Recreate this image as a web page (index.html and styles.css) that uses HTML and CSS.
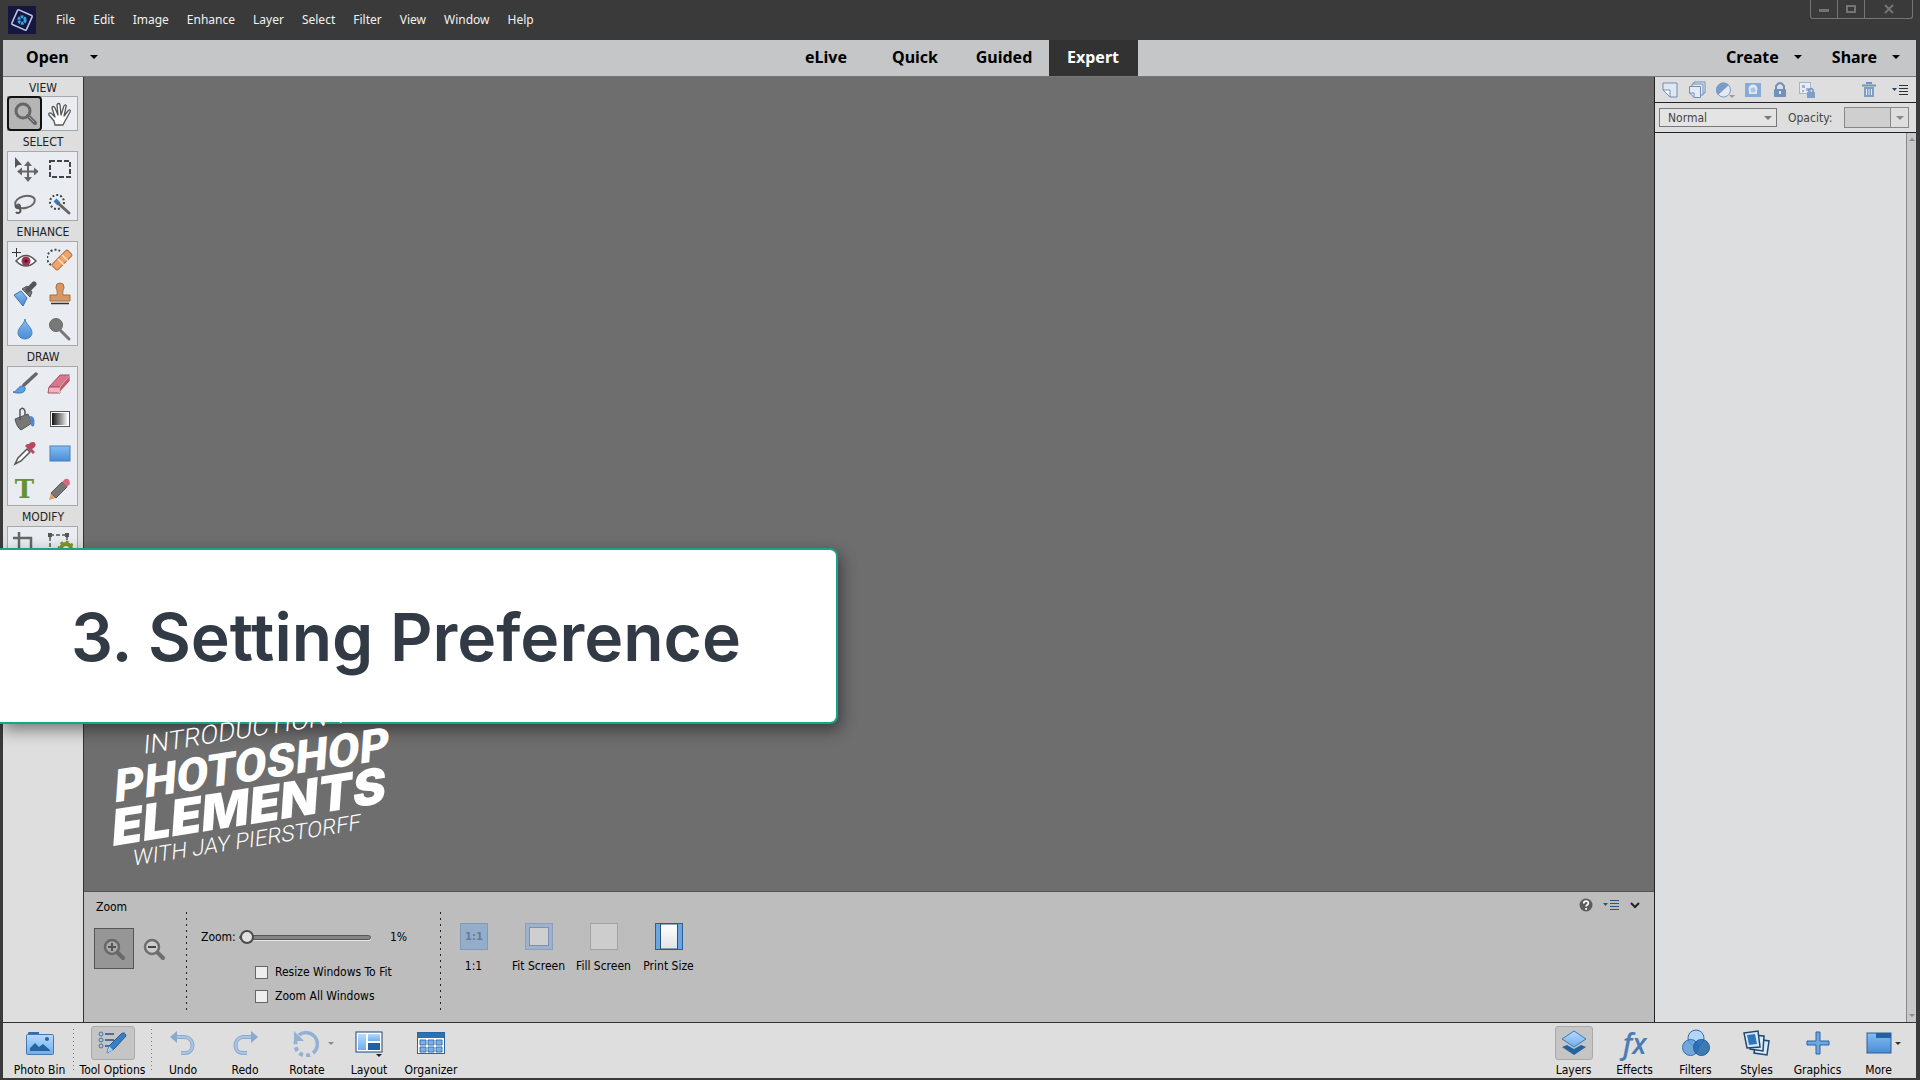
FILE: index.html
```html
<!DOCTYPE html>
<html lang="en">
<head>
<meta charset="utf-8">
<title>Photoshop Elements Editor</title>
<link rel="stylesheet" href="styles.css">
</head>
<body>
<svg width="0" height="0" class="defs" aria-hidden="true">
  <defs>
    <linearGradient id="blue" x1="0" y1="0" x2="0" y2="1"><stop offset="0" stop-color="#86bdf5"/><stop offset="1" stop-color="#4a8cd3"/></linearGradient>
    <linearGradient id="light" x1="0" y1="0" x2="0" y2="1"><stop offset="0" stop-color="#b4dbff"/><stop offset="1" stop-color="#70adec"/></linearGradient>
    <linearGradient id="fade" x1="0" y1="0" x2="1" y2="0"><stop offset="0" stop-color="#111"/><stop offset="1" stop-color="#fff"/></linearGradient>
    <linearGradient id="paper" x1="0" y1="0" x2="0" y2="1"><stop offset="0" stop-color="#fff"/><stop offset="1" stop-color="#e2e2e6"/></linearGradient>
  </defs>
</svg>

<header class="titlebar">
  <svg class="logo" width="28" height="28" viewBox="0 0 28 28"><rect width="28" height="28" fill="#171640"/><rect x="6" y="6" width="16" height="16" rx="1" fill="none" stroke="#b6cce8" stroke-width="1.5" transform="rotate(24 14 14)"/><circle cx="14" cy="14" r="3.2" fill="none" stroke="#35a8e6" stroke-width="3" stroke-dasharray="2.6 .75"/></svg>
  <nav class="menu">
    <a href="#">File</a><a href="#">Edit</a><a href="#">Image</a><a href="#">Enhance</a><a href="#">Layer</a><a href="#">Select</a><a href="#">Filter</a><a href="#">View</a><a href="#">Window</a><a href="#">Help</a>
  </nav>
  <div class="window-controls">
    <button aria-label="Minimize"><svg width="12" height="12"><path d="M1 6h10v3H1z" fill="#747474"/></svg></button>
    <button aria-label="Maximize"><svg width="12" height="12"><rect x="2" y="3" width="8" height="6" fill="none" stroke="#747474" stroke-width="2"/></svg></button>
    <button aria-label="Close" class="close"><svg width="12" height="12"><path d="M2 2l8 8M10 2l-8 8" stroke="#747474" stroke-width="2"/></svg></button>
  </div>
</header>

<div class="modebar">
  <div class="mode-side"><button class="mode-menu open">Open <i class="caret"></i></button></div>
  <nav class="tabs">
    <button>eLive</button><button>Quick</button><button>Guided</button><button class="active">Expert</button>
  </nav>
  <div class="mode-side right"><button class="mode-menu">Create <i class="caret"></i></button><button class="mode-menu">Share <i class="caret"></i></button></div>
</div>

<main class="workspace">
  <aside class="tools">
    <h2>VIEW</h2>
    <div class="toolbox">
      <button class="selected" aria-label="Zoom"><svg width="26" height="26"><circle cx="11" cy="10" r="7" fill="none" stroke="#666" stroke-width="3"/><path d="M16 15l7 7" stroke="#666" stroke-width="4" stroke-linecap="round"/><path d="M17 16l5 5" stroke="#999" stroke-width="1"/></svg></button>
      <button aria-label="Hand"><svg width="26" height="26"><path d="M8 24l-1-4-5-6c-1-2 1-3 3-1l3 3-3-9c0-2 2-2 3 0l3 7-1-10c0-2 3-2 3 0l1 10 3-9c1-2 3-1 2 1l-2 9 4-5c1-2 3-1 2 1l-5 9-2 4z" fill="#fff" stroke="#555" stroke-width="1.3" stroke-linejoin="round"/></svg></button>
    </div>
    <h2>SELECT</h2>
    <div class="toolbox">
      <button aria-label="Move"><svg width="26" height="26"><path d="M3 1l7 8H6l-3 3z" fill="#555"/><path d="M16 8v15M8 15.500h16" stroke="#666" stroke-width="2"/><path d="M16 5l4 5h-8zM16 26l4-5h-8zM5 15.500l5-4v8zM27 15.500l-5-4v8z" fill="#666"/></svg></button>
      <button aria-label="Marquee"><svg width="26" height="26"><rect x="3" y="5" width="20" height="16" fill="none" stroke="#444" stroke-width="2" stroke-dasharray="5 2"/></svg></button>
      <button aria-label="Lasso"><svg width="26" height="26"><ellipse cx="13" cy="11" rx="10" ry="6" fill="none" stroke="#666" stroke-width="2" transform="rotate(-14 13 11)"/><path d="M4 14c-2 4 5 4 4 1s-5-1-1 2-1 7-3 4" fill="none" stroke="#555" stroke-width="2"/></svg></button>
      <button aria-label="Quick selection"><svg width="26" height="26"><circle cx="10" cy="11" r="7" fill="none" stroke="#444" stroke-width="2" stroke-dasharray="2 2"/><path d="M8 9l4 4" stroke="#3478bd" stroke-width="4"/><path d="M12 13l10 9" stroke="#666" stroke-width="3" stroke-linecap="round"/></svg></button>
    </div>
    <h2>ENHANCE</h2>
    <div class="toolbox">
      <button aria-label="Red eye"><svg width="26" height="26"><path d="M4 15q10-11 20 0-10 10-20 0z" fill="#fff" stroke="#555" stroke-width="1.500"/><circle cx="14" cy="15" r="4.500" fill="#a03050"/><circle cx="14" cy="15" r="1.500" fill="#401020"/><path d="M0 6.500h9M4.500 2v9" stroke="#333"/></svg></button>
      <button aria-label="Spot healing"><svg width="26" height="26"><path d="M4 19a8 8 0 1 1 9-14" fill="none" stroke="#444" stroke-width="2" stroke-dasharray="2 2"/><rect x="4" y="10" width="22" height="8" rx="2" fill="#eda56e" stroke="#b8713d" transform="rotate(-45 15 14)"/><path d="M11 13l6 6M15 9l6 6" stroke="#fbe0c8" stroke-width="1.500"/></svg></button>
      <button aria-label="Smart brush"><svg width="26" height="26"><path d="M2 14l7-4 6 7-4 8z" fill="url(#blue)" stroke="#3d6fa8"/><path d="M10 8l8 8 2-5-5-6z" fill="#777" stroke="#555"/><path d="M16 9l6-6" stroke="#555" stroke-width="5" stroke-linecap="round"/></svg></button>
      <button aria-label="Clone stamp"><svg width="26" height="26"><path d="M9 6a4 4 0 0 1 8 0c0 3-2 3-1 8h7v6H3v-6h7c1-5-1-5-1-8z" fill="#d59866" stroke="#a86c3e"/><path d="M4 22.500h18" stroke="#333" stroke-width="1.500"/></svg></button>
      <button aria-label="Blur"><svg width="26" height="26"><path d="M13 3c1 6 7 8 7 14a7 6 0 0 1-14 0c0-6 6-8 7-14z" fill="url(#blue)" stroke="#4b83bd"/></svg></button>
      <button aria-label="Dodge"><svg width="26" height="26"><circle cx="9" cy="9" r="6.500" fill="#777" stroke="#666"/><path d="M13 14l9 9" stroke="#777" stroke-width="3" stroke-linecap="round"/></svg></button>
    </div>
    <h2>DRAW</h2>
    <div class="toolbox">
      <button aria-label="Brush"><svg width="26" height="26"><path d="M12 14l12-11" stroke="#666" stroke-width="3.500" stroke-linecap="round"/><path d="M1 21c4 0 5-6 9-6 5 0 4 7-2 7-3 0-5 0-7-1z" fill="#5a9fe6" stroke="#3978b5"/></svg></button>
      <button aria-label="Eraser"><svg width="26" height="26"><path d="M2 16L13 4h10L13 16z" fill="#d9788b" stroke="#a8506a"/><path d="M2 16h11v6H1z" fill="#f2b3bf" stroke="#a8506a"/><path d="M13 16L23 4v6L12 22z" fill="#bd5a70" stroke="#fff" stroke-width=".5"/></svg></button>
      <button aria-label="Paint bucket"><svg width="26" height="26"><path d="M3 13l13-5 4 9-11 7c-3-2-5-6-6-11z" fill="#777" stroke="#555"/><path d="M8 14V4q3-4 5 1v4" fill="none" stroke="#555" stroke-width="1.500"/><path d="M18 10c5 0 5 6 4 10-2 1-3 0-3-2z" fill="#4a8ad2"/></svg></button>
      <button aria-label="Gradient"><svg width="26" height="26"><rect x="3.500" y="5.500" width="19" height="15" fill="#fff" stroke="#555"/><rect x="5" y="7" width="16" height="12" fill="url(#fade)"/></svg></button>
      <button aria-label="Color picker"><svg width="26" height="26"><path d="M3 23l3-6 9-9 3 3-9 9z" fill="#fff" stroke="#555" stroke-width="1.500"/><path d="M13 5l8 8 2-2-3-3c4-2 4-4 3-6s-5-1-6 1l-2 0z" fill="#b8495e"/></svg></button>
      <button aria-label="Shape"><svg width="26" height="26"><rect x="3" y="5" width="20" height="15" fill="url(#blue)" stroke="#4a80ba"/></svg></button>
      <button aria-label="Type" class="type">T</button>
      <button aria-label="Pencil"><svg width="26" height="26"><path d="M2 24l2-7 5 5z" fill="#dba070"/><path d="M4 17L15 6l5 5L9 22z" fill="#777" stroke="#5a5a5a"/><path d="M15 6l3-3q5-1 5 5l-3 3z" fill="#d6697e"/></svg></button>
    </div>
    <h2>MODIFY</h2>
    <div class="toolbox">
      <button aria-label="Crop"><svg width="26" height="26"><path d="M7 1v18h18M1 7h18v18" fill="none" stroke="#666" stroke-width="2.500"/></svg></button>
      <button aria-label="Recompose"><svg width="26" height="26"><rect x="3" y="4" width="17" height="16" fill="none" stroke="#555" stroke-width="1.500" stroke-dasharray="4 2"/><path d="M1 2h4v4H1zM18 2h4v4h-4z" fill="#555"/><circle cx="19" cy="18" r="5" fill="none" stroke="#7f962f" stroke-width="4"/><circle cx="19" cy="18" r="7.500" fill="none" stroke="#7f962f" stroke-width="2" stroke-dasharray="3 2.800"/></svg></button>
    </div>
  </aside>

  <section class="center">
    <div class="canvas"></div>
    <section class="options">
      <div class="zoom-mode">
        <h3>Zoom</h3>
        <div class="zoom-buttons">
          <button class="selected" aria-label="Zoom in"><svg width="24" height="24"><circle cx="10" cy="10" r="7" fill="#a9a9a9" stroke="#686868" stroke-width="2.500"/><path d="M6 10h8M10 6v8" stroke="#555" stroke-width="2"/><path d="M16 16l5 5" stroke="#686868" stroke-width="4" stroke-linecap="round"/></svg></button>
          <button aria-label="Zoom out"><svg width="24" height="24"><circle cx="10" cy="10" r="7" fill="#ccc" stroke="#6e6e6e" stroke-width="2.500"/><path d="M6 10h8" stroke="#444" stroke-width="2"/><path d="M16 16l5 5" stroke="#6e6e6e" stroke-width="4" stroke-linecap="round"/></svg></button>
        </div>
      </div>
      <form class="zoom-settings">
        <div class="zoom-line"><label for="zoom">Zoom:</label><input id="zoom" type="range" min="0" max="100" value="0"><output for="zoom">1%</output></div>
        <label class="check"><input type="checkbox"> Resize Windows To Fit</label>
        <label class="check"><input type="checkbox"> Zoom All Windows</label>
      </form>
      <div class="fit-buttons">
        <button><svg width="28" height="28"><rect x=".5" y=".5" width="27" height="26" fill="#94adcb" stroke="#8299b6"/><text x="14" y="17" text-anchor="middle" class="ratio">1:1</text></svg>1:1</button>
        <button><svg width="28" height="28"><rect x=".5" y=".5" width="27" height="26" fill="#9fb2cc" stroke="#8b9fbb"/><rect x="4.500" y="4.500" width="19" height="18" fill="#cfcfcf" stroke="#7d92b0"/></svg>Fit Screen</button>
        <button><svg width="28" height="28"><rect x=".5" y=".5" width="27" height="26" fill="#cdcdcd" stroke="#a2a2a2"/></svg>Fill Screen</button>
        <button><svg width="28" height="28"><rect x=".5" y=".5" width="27" height="26" fill="#6aa7e0" stroke="#2e5f96"/><path d="M5.500 1h17v25h-17z" fill="url(#paper)" stroke="#2b5180"/></svg>Print Size</button>
      </div>
      <div class="panel-actions">
        <button aria-label="Help"><svg width="14" height="14"><circle cx="7" cy="7" r="6.500" fill="#5c5c5c"/><path d="M4.800 5.500q0-2.300 2.300-2.300t2.200 2q0 1.200-1.200 1.800-1 .6-1 1.600M7.100 10v1.800" fill="none" stroke="#fff" stroke-width="1.800"/></svg></button>
        <button aria-label="Panel menu"><svg width="16" height="12"><path d="M0 4h5L2.500 7z" fill="#2c5584"/><path d="M7 1.500h9M7 4.500h9M7 7.500h9M7 10.500h9" stroke="#2c5584"/></svg></button>
        <button aria-label="Collapse"><svg width="12" height="12"><path d="M2 4l4 4 4-4" fill="none" stroke="#222" stroke-width="2"/></svg></button>
      </div>
    </section>
  </section>

  <aside class="layers">
    <div class="layer-tools">
      <button aria-label="New layer"><svg width="18" height="18"><path d="M2 2h14v14H9L2 9z" fill="#dfe7f2" stroke="#6e8eb6"/><path d="M2 9h7v7z" fill="#fff" stroke="#6e8eb6"/></svg></button>
      <button aria-label="New group"><svg width="18" height="18"><path d="M6 1h11v11H6z" fill="#e3eaf3" stroke="#6e8eb6"/><path d="M4 3h11v11H4z" fill="#e3eaf3" stroke="#6e8eb6"/><path d="M1.500 5.500h11v11H6l-4.500-4.500z" fill="#e3eaf3" stroke="#6e8eb6"/><path d="M1.500 12H6v4.500" fill="none" stroke="#6e8eb6"/></svg></button>
      <button aria-label="Adjustment layer"><svg width="20" height="18"><circle cx="8.500" cy="9" r="7" fill="#e4eaf2" stroke="#7b9cc5"/><path d="M3 14A7 7 0 0 1 14 4z" fill="#7b9cc5"/><path d="M14 14h6l-3 3z" fill="#999"/></svg></button>
      <button aria-label="Layer mask"><svg width="18" height="18"><rect x="1" y="2" width="16" height="14" fill="#85acd9"/><circle cx="9" cy="8" r="4.500" fill="#dfe7f2"/><path d="M5 9h8v4H5z" fill="#dfe7f2"/><circle cx="9" cy="9" r="2.500" fill="#a9c4e4"/></svg></button>
      <button aria-label="Lock"><svg width="18" height="18"><path d="M5 8V5q4-6 8 0v3" fill="none" stroke="#6f91bb" stroke-width="2"/><rect x="3" y="8" width="12" height="8" rx="1" fill="#6f91bb"/><path d="M9 10v3" stroke="#e4eaf2" stroke-width="2"/></svg></button>
      <button aria-label="Lock transparency"><svg width="18" height="18"><rect x="1.500" y="1.500" width="11" height="11" fill="#e9edf3" stroke="#a1b6d0"/><path d="M4 4h3v3H4zM8 7h3v3H8zM4 9h2v2H4z" fill="#9cb4d2"/><path d="M11 12V9q2-3 4 0v3" fill="none" stroke="#6f91bb" stroke-width="1.500"/><rect x="9" y="11" width="8" height="6" fill="#7f9fc7"/></svg></button>
      <button aria-label="Delete" class="trash"><svg width="18" height="18"><path d="M2 4.500h14M6 2h6" stroke="#7394bb" stroke-width="2"/><path d="M4 6h10v10H4z" fill="#7d9ec6"/><path d="M6.500 8v6M9 8v6M11.500 8v6" stroke="#e4eaf2"/></svg></button>
      <button aria-label="Panel menu" class="panel-menu"><svg width="16" height="12"><path d="M0 4h5L2.500 7z" fill="#24466c"/><path d="M7 1.500h9M7 4.500h9M7 7.500h9M7 10.500h9" stroke="#333"/></svg></button>
    </div>
    <div class="blend">
      <div class="select-wrap"><select aria-label="Blend mode"><option>Normal</option></select><i class="caret"></i></div>
      <label for="opacity">Opacity:</label>
      <div class="combo"><input id="opacity" type="text" disabled><button aria-label="Opacity slider"><i class="caret"></i></button></div>
    </div>
    <div class="layer-list"><div class="scrollbar"><i class="caret up"></i><i class="caret"></i></div></div>
  </aside>
</main>

<footer class="taskbar">
  <button class="task bin"><span><svg width="28" height="24"><path d="M2 5V2q0-1 1-1h10v4z" fill="#3f6c9c"/><rect x=".5" y="3.500" width="27" height="20" rx="1" fill="url(#light)" stroke="#4578b0"/><path d="M4 20v-3l5-5 4 4 4-3 7 6v1z" fill="#24659f"/><circle cx="21" cy="8" r="2" fill="#24659f"/></svg></span>Photo Bin</button>
  <button class="task options-toggle"><span class="selected"><svg width="30" height="24"><circle cx="3" cy="3" r="2" fill="none" stroke="#44719f"/><circle cx="3" cy="9" r="2" fill="none" stroke="#44719f"/><circle cx="3" cy="15" r="2" fill="none" stroke="#44719f"/><path d="M7 3h9M7 9h9M7 15h4" stroke="#44719f" stroke-width="2"/><path d="M9 22l2-7L23 3q4-3 5 2L16 18z" fill="#397fc7" stroke="#245b92"/><path d="M9 22l2-7 4 4z" fill="#a7d0f3"/></svg></span>Tool Options</button>
  <button class="task"><span><svg width="26" height="26"><path d="M4 7h11c10 1 10 16 0 16h-4" fill="none" stroke="#8ba9cc" stroke-width="4"/><path d="M4 7h11c10 1 10 16 0 16h-4" fill="none" stroke="#a9c6e8" stroke-width="2"/><path d="M0 7l7-6v12z" fill="#8ba9cc"/></svg></span>Undo</button>
  <button class="task"><span><svg width="26" height="26"><path d="M22 7H11c-10 1-10 16 0 16h4" fill="none" stroke="#8ba9cc" stroke-width="4"/><path d="M22 7H11c-10 1-10 16 0 16h4" fill="none" stroke="#a9c6e8" stroke-width="2"/><path d="M26 7l-7-6v12z" fill="#8ba9cc"/></svg></span>Redo</button>
  <button class="task"><span><svg width="28" height="28"><path d="M6 6a11 11 0 0 1 14 18" fill="none" stroke="#93b1d4" stroke-width="3.500"/><path d="M17 26A11 11 0 0 1 3 12" fill="none" stroke="#93b1d4" stroke-width="4" stroke-dasharray="4 3"/><path d="M1 2v10h10z" fill="#93b1d4"/></svg><i class="caret small"></i></span>Rotate</button>
  <button class="task"><span><svg width="28" height="28"><rect x="1" y="3" width="26" height="20" fill="#fff" stroke="#1d4370"/><path d="M3 5h8v16H3z" fill="url(#light)"/><path d="M13 5h12v7H13z" fill="url(#light)"/><path d="M13 14h12v7H13z" fill="#22619f"/><path d="M21 25h6l-3 3z" fill="#222"/></svg></span>Layout</button>
  <button class="task"><span><svg width="28" height="24"><rect x=".5" y="1.500" width="27" height="21" fill="#fff" stroke="#2765a0"/><path d="M1 2h26v5H1z" fill="#2773b5"/><path d="M3 9h6v5H3zM11 9h6v5h-6zM19 9h6v5h-6zM3 16h6v5H3zM11 16h6v5h-6zM19 16h6v5h-6z" fill="#78b0e8" stroke="#3973aa"/></svg></span>Organizer</button>
  <div class="task-right">
    <button class="task"><span class="selected narrow"><svg width="28" height="26"><path d="M2 17l12 8 12-8-5-2-7 4-7-4z" fill="#24639f"/><path d="M14 1l12 8-12 8L2 9z" fill="url(#light)" stroke="#3f78b4"/></svg></span>Layers</button>
    <button class="task"><span class="fx">fx</span>Effects</button>
    <button class="task"><span><svg width="28" height="28"><circle cx="14" cy="9" r="8" fill="#b1d6fa" stroke="#376fa9"/><circle cx="8.500" cy="18.500" r="8" fill="#5698da" fill-opacity=".8" stroke="#376fa9"/><circle cx="19.500" cy="18.500" r="8" fill="#2168ad" fill-opacity=".85" stroke="#2a5c91"/></svg></span>Filters</button>
    <button class="task"><span><svg width="28" height="28"><g fill="#d8eafa" stroke="#24476e" stroke-width="1.500"><path d="M13 10l13 2-2 14-13-2z"/><path d="M8 6l13 1-1 15-13-2z"/><path d="M1 4l14-2 2 16-13 1z"/></g><path d="M4 6l8-1 2 10-8 1z" fill="#2e76ba"/></svg></span>Styles</button>
    <button class="task"><span><svg width="26" height="26"><path d="M11 2h4v9h9v4h-9v9h-4v-9H2v-4h9z" fill="#69a8e7" stroke="#2f659d"/></svg></span>Graphics</button>
    <button class="task"><span><svg width="26" height="24"><rect x="1" y="2" width="24" height="20" fill="url(#blue)" stroke="#2d6096"/><path d="M10 2h15v5H10z" fill="#24639f"/></svg><i class="caret small dark"></i></span>More</button>
  </div>
</footer>

<div class="title-card">3. Setting Preference</div>
<div class="watermark">
  <div class="thin">INTRODUCTION TO</div>
  <div class="heavy">PHOTOSHOP</div>
  <div class="wide">ELEMENTS</div>
  <div class="thin small-print">WITH JAY PIERSTORFF</div>
</div>
</body>
</html>
```
FILE: styles.css
```css
* { box-sizing: border-box; }
body {
  margin: 0;
  min-height: 100vh;
  display: flex;
  flex-direction: column;
  padding: 0 4px 2px 3px;
  background: #3a3a3a;
  color: #111;
  font: 12px/16px "DejaVu Sans Condensed", "DejaVu Sans", sans-serif;
  position: relative;
  overflow: hidden;
}
button { border: 0; padding: 0; background: none; color: inherit; font: inherit; }
h2, h3 { margin: 0; font: inherit; }
svg { display: block; flex: none; }
.defs { position: absolute; }
.caret { display: block; border: solid transparent; border-width: 4px 4px 0; border-top-color: currentColor; }

.titlebar { height: 40px; display: flex; align-items: center; padding: 0 0 0 5px; }
.menu { display: flex; gap: 18px; margin-left: 20px; font: 12px/16px "Noto Sans", sans-serif; }
.menu a { color: #f2f2f2; text-decoration: none; }
.window-controls { display: flex; margin-left: auto; align-self: flex-start; border: 1px solid #747474; border-top: 0; border-radius: 0 0 3px 3px; margin-right: 3px; }
.window-controls button { width: 27px; height: 18px; display: grid; place-items: center; border-right: 1px solid #747474; }
.window-controls .close { width: 47px; border-right: 0; }

.modebar { height: 37px; display: grid; grid-template-columns: 1fr auto 1fr; background: #c5c6c8; border-bottom: 1px solid #777; font: bold 16px/20px "Noto Sans", sans-serif; color: #000; }
.mode-side { display: flex; align-items: center; padding: 0 0 2px 23px; }
.mode-side.right { justify-content: flex-end; gap: 30px; padding-right: 16px; }
.mode-menu { display: flex; align-items: center; gap: 15px; }
.mode-menu.open { gap: 21px; }
.tabs { display: flex; }
.tabs button { width: 89px; padding-bottom: 2px; }
.tabs .active { background: #323232; color: #fff; }

.workspace { flex: 1; display: grid; grid-template-columns: 81px 1fr 262px; }
.tools { background: #dedede; border-right: 1px solid #333; padding: 0 4px; }
.tools h2 { height: 20px; line-height: 22px; text-align: center; color: #222; }
.tools h2:first-child { height: 19px; }
.toolbox { display: flex; flex-wrap: wrap; width: 71px; background: #e9edf1; box-shadow: inset 0 0 0 1px #a6a8aa; }
.toolbox button { width: 35px; height: 35px; display: grid; place-items: center; }
.toolbox .selected { background: #b5b5b5; border: 2px solid #111; border-radius: 4px; }
.toolbox .type { font: bold 26px/30px "DejaVu Serif", serif; color: #65922f; }

.center { display: flex; flex-direction: column; min-width: 0; }
.canvas { flex: 1; background: #6e6e6e; }
.options { height: 131px; background: #bdbdbd; border-top: 1px solid #555; display: flex; align-items: flex-start; padding: 0 13px 0 10px; color: #000; }
.zoom-mode { width: 92px; padding-top: 7px; }
.zoom-mode h3 { padding-left: 2px; }
.zoom-buttons { display: flex; margin-top: 13px; }
.zoom-buttons button { width: 40px; height: 41px; display: grid; place-items: center; }
.zoom-buttons .selected { background: #969696; border: 1px solid #555; }
.zoom-settings {
  width: 255px;
  height: 101px;
  margin-top: 20px;
  padding: 17px 0 0 15px;
  background:
    repeating-linear-gradient(#222 0 2px, transparent 2px 6px) left / 1px 100% no-repeat,
    repeating-linear-gradient(#222 0 2px, transparent 2px 6px) right / 1px 100% no-repeat;
}
.zoom-line { display: flex; align-items: center; height: 16px; margin-bottom: 19px; }
.zoom-line label { width: 38px; }
.zoom-line output { margin-left: 19px; }
input[type=range] { appearance: none; width: 132px; height: 16px; margin: 0; background: none; }
input[type=range]::-webkit-slider-runnable-track { height: 5px; border: 1px solid #555; border-radius: 3px; background: #858585; box-shadow: 0 1px 0 #e4e4e4; }
input[type=range]::-webkit-slider-thumb { appearance: none; width: 14px; height: 14px; margin-top: -6px; border: 2px solid #4c4c4c; border-radius: 50%; background: #e0e0e0; }
.check { display: flex; align-items: center; gap: 7px; height: 16px; margin: 0 0 8px 54px; }
.check input { appearance: none; width: 13px; height: 13px; margin: 0; border: 1px solid #666; background: #eee; }
.fit-buttons { display: flex; padding-top: 31px; }
.fit-buttons button { width: 65px; display: flex; flex-direction: column; align-items: center; gap: 7px; white-space: nowrap; }
.ratio { font: bold 10px "DejaVu Sans", sans-serif; fill: #667d99; }
.panel-actions { display: flex; align-items: center; gap: 10px; margin: 6px 0 0 auto; }

.layers { display: flex; flex-direction: column; border-left: 1px solid #222; background: #dedede; color: #444; }
.layer-tools { height: 26px; display: flex; align-items: center; gap: 9px; padding: 0 8px 0 6px; border-bottom: 1px solid #222; }
.layer-tools .trash { margin-left: auto; }
.layer-tools .panel-menu { margin-left: 5px; }
.blend { height: 30px; display: flex; align-items: center; gap: 11px; padding: 0 7px 0 4px; border-bottom: 1px solid #222; }
.select-wrap { width: 118px; height: 19px; display: flex; align-items: center; border: 1px solid #777; background: #e4e4e4; padding-right: 4px; color: #777; }
.select-wrap select { flex: 1; appearance: none; border: 0; padding: 0 8px; background: none; color: #444; font: inherit; }
.combo { display: flex; margin-left: auto; height: 21px; border: 1px solid #888; color: #888; }
.combo input { width: 46px; border: 0; border-right: 1px solid #888; background: #cfcfcf; }
.combo button { width: 17px; display: grid; place-items: center; }
.layer-list { flex: 1; display: flex; justify-content: flex-end; background: #dddedf; }
.scrollbar { width: 10px; display: flex; flex-direction: column; justify-content: space-between; align-items: center; padding: 5px 0; border-left: 1px solid #888; background: #c8c8ca; color: #888; }
.scrollbar .caret { border-width: 3px 3px 0; }
.scrollbar .up { rotate: 180deg; }

.taskbar { height: 56px; display: flex; background: #dedede; border-top: 1px solid #333; color: #000; }
.task { width: 62px; display: flex; flex-direction: column; align-items: center; gap: 2px; padding-top: 3px; white-space: nowrap; }
.task > span { position: relative; width: 44px; height: 36px; display: grid; place-items: center; }
.task .selected { background: #c5c5c5; border: 1px solid #aaa; border-radius: 3px; }
.task .narrow { width: 38px; }
.bin { width: 70px; padding-left: 3px; }
.options-toggle {
  width: 79px;
  background:
    repeating-linear-gradient(#777 0 1px, transparent 1px 4px) left 6px / 1px 44px no-repeat,
    repeating-linear-gradient(#777 0 1px, transparent 1px 4px) right 6px / 1px 44px no-repeat;
}
.task .small { position: absolute; right: -5px; top: 16px; border-width: 3px 3px 0; color: #888; }
.task .dark { color: #333; right: 0; }
.task-right { display: flex; margin-left: auto; padding-right: 7px; }
.task-right .task { width: 61px; }
.task .fx { font: italic 600 28px/30px "Open Sans", sans-serif; color: #4a7db3; }

.title-card {
  position: absolute;
  left: 0;
  top: 548px;
  width: 838px;
  height: 176px;
  padding: 0 0 0 71px;
  border: 2px solid #17a388;
  border-left: 0;
  border-radius: 0 8px 8px 0;
  background: #fff;
  box-shadow: 3px 6px 16px rgba(0, 0, 0, .45);
  color: #323a45;
  font: 600 66px/174px "Inter", sans-serif;
  white-space: nowrap;
}
.watermark {
  position: absolute;
  left: 113px;
  top: 712px;
  color: #fff;
  white-space: nowrap;
  transform: skewY(-9deg) skewX(-4deg);
  width: 276px;
  text-align: center;
}
.thin { font: 300 26px/32px "Roboto", sans-serif; }
.heavy { font: 900 46px/42px "Roboto", sans-serif; }
.wide { font: 900 50px/40px "Inter", sans-serif; }
.small-print { font-size: 22px; line-height: 28px; }
```
